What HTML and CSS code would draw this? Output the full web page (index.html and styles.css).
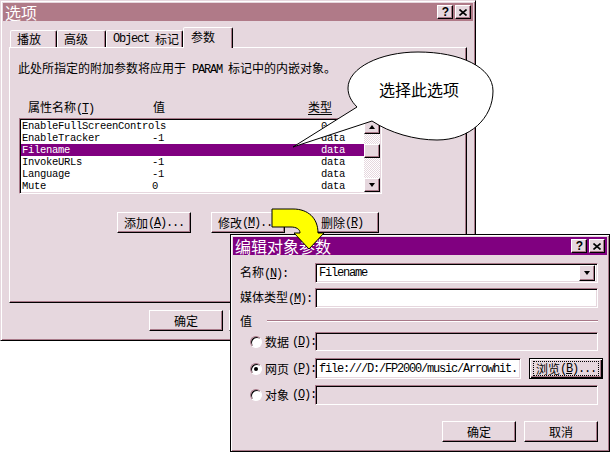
FILE: index.html
```html
<!DOCTYPE html>
<html lang="zh-CN">
<head>
<meta charset="utf-8">
<title>选项</title>
<link rel="stylesheet" href="styles.css">
</head>
<body>
<div class="desk">

  <section class="win win-opts">
    <header class="title title-inactive">
      <span class="title-text">选项</span>
      <div class="title-btns">
        <span class="tbtn tbtn-q">?</span>
        <span class="tbtn"><svg class="xglyph" width="8" height="7" viewBox="0 0 8 7"><path d="M0.5 0.5L7.5 6.5M7.5 0.5L0.5 6.5" stroke="#000" stroke-width="1.6" fill="none"/></svg></span>
      </div>
    </header>

    <nav class="tabs">
      <span class="tab">播放</span>
      <span class="tab">高级</span>
      <span class="tab"><span class="mono">Object&nbsp;</span>标记</span>
      <span class="tab tab-active">参数</span>
    </nav>

    <div class="panel">
      <p class="desc">此处所指定的附加参数将应用于<span class="mono">&nbsp;PARAM&nbsp;</span>标记中的内嵌对象。</p>
      <div class="cols">
        <span>属性名称<span class="mono">(<u>T</u>)</span></span>
        <span>值</span>
        <span class="col-type">类型</span>
      </div>
      <div class="listbox">
        <ul class="rows">
          <li class="row"><span>EnableFullScreenControls</span><span></span><span>0</span></li>
          <li class="row"><span>EnableTracker</span><span>-1</span><span>data</span></li>
          <li class="row row-sel"><span>Filename</span><span></span><span>data</span></li>
          <li class="row"><span>InvokeURLs</span><span>-1</span><span>data</span></li>
          <li class="row"><span>Language</span><span>-1</span><span>data</span></li>
          <li class="row"><span>Mute</span><span>0</span><span>data</span></li>
        </ul>
        <div class="vscroll">
          <span class="sbtn"><i class="tri tri-up"></i></span>
          <span class="sbtn thumb"></span>
          <span class="sfill"></span>
          <span class="sbtn"><i class="tri tri-down"></i></span>
        </div>
      </div>
      <div class="actions">
        <button class="btn">添加<span class="mono">(<u>A</u>)...</span></button>
        <button class="btn">修改<span class="mono">(<u>M</u>)...</span></button>
        <button class="btn">删除<span class="mono">(<u>R</u>)</span></button>
      </div>
    </div>

    <footer class="footer">
      <button class="btn">确定</button>
      <button class="btn">取消</button>
    </footer>
  </section>

  <section class="win win-edit">
    <header class="title title-active">
      <span class="title-text">编辑对象参数</span>
      <div class="title-btns">
        <span class="tbtn tbtn-q">?</span>
        <span class="tbtn"><svg class="xglyph" width="8" height="7" viewBox="0 0 8 7"><path d="M0.5 0.5L7.5 6.5M7.5 0.5L0.5 6.5" stroke="#000" stroke-width="1.6" fill="none"/></svg></span>
      </div>
    </header>

    <div class="edit-body">
      <div class="frow frow-first">
        <span>名称<span class="mono">(<u>N</u>):</span></span>
        <div class="field combo"><span class="mono">Filename</span><span class="dropbtn"><i class="tri tri-down"></i></span></div>
      </div>
      <div class="frow frow-second">
        <span>媒体类型<span class="mono">(<u>M</u>):</span></span>
        <div class="field"></div>
      </div>
      <div class="group">
        <span>值</span>
        <span class="groove"></span>
      </div>
      <div class="frow rrow rrow-1">
        <span class="radio"><i class="rdot"></i>数据<span class="mono">(<u>D</u>):</span></span>
        <div class="field field-off"></div>
      </div>
      <div class="frow rrow rrow-2">
        <span class="radio"><i class="rdot rdot-on"></i>网页<span class="mono">(<u>P</u>):</span></span>
        <div class="urlline">
          <div class="field"><span class="mono">file:///D:/FP2000/music/Arrowhit.</span></div>
          <button class="btn btn-default"><span class="focus">浏览<span class="mono">(<u>B</u>)...</span></span></button>
        </div>
      </div>
      <div class="frow rrow rrow-3">
        <span class="radio"><i class="rdot"></i>对象<span class="mono">(<u>O</u>):</span></span>
        <div class="field field-off"></div>
      </div>
      <div class="btnrow">
        <button class="btn">确定</button>
        <button class="btn">取消</button>
      </div>
    </div>
  </section>

  <svg class="overlay" width="611" height="453" viewBox="0 0 611 453">
    <path class="bubble" d="M357 107 L293 147 L372 121 C390 133 415 140 437 140 C470 140 493 118 493 91 C493 67 460 52 418 52 C380 52 348 68 348 88 C348 95 351 101 357 107 Z"/>
    <text class="bubble-text" x="419" y="96" text-anchor="middle">选择此选项</text>
    <path class="arrow" d="M272 209 L293 209 C308 209 318 218 318 233 L324 233 L309 249 L294 233 L300 233 C300 229 296 227 291 227 L272 227 Z"/>
  </svg>

</div>
</body>
</html>
```

FILE: styles.css
```css
* {
  box-sizing: border-box;
  margin: 0;
  padding: 0;
}

html, body {
  background: #fff;
}

body {
  width: 611px;
  height: 453px;
  overflow: hidden;
  font-family: "Noto Sans CJK SC", "Noto Sans", sans-serif;
  font-size: 12px;
  line-height: 12px;
  color: #000;
}

u {
  text-decoration: underline;
  text-underline-offset: 1px;
}

.desk {
  position: relative;
  width: 611px;
  height: 453px;
}

.mono,
.row {
  font-family: "Liberation Mono", "DejaVu Sans Mono", monospace;
  font-size: 12px;
  letter-spacing: -1.2px;
}

/* ---------- window frame ---------- */
.win {
  position: absolute;
  display: flex;
  flex-direction: column;
  background: #e6d7de;
  border: 1px solid;
  border-color: #e6d7de #000 #000 #e6d7de;
  box-shadow: inset 1px 1px 0 #fff, inset -1px -1px 0 #a87888;
  padding: 2px;
}

.win-opts {
  left: 0;
  top: 0;
  width: 476px;
  height: 341px;
}

.win-edit {
  left: 230px;
  top: 234px;
  width: 380px;
  height: 218px;
  border-color: #000;
}

.title {
  height: 18px;
  flex: none;
  display: flex;
  align-items: center;
  justify-content: space-between;
  padding: 0 2px 0 2px;
  color: #fff;
}

.title-text {
  font-size: 16px;
  line-height: 18px;
}

.title-inactive {
  background: #b07a88;
}

.title-active {
  background: #800080;
}

.title-btns {
  display: flex;
  gap: 2px;
}

.tbtn {
  width: 16px;
  height: 14px;
  display: flex;
  align-items: center;
  justify-content: center;
  background: #e6d7de;
  border: 1px solid;
  border-color: #fff #000 #000 #fff;
  box-shadow: inset -1px -1px 0 #a87888;
  color: #000;
}

.tbtn-q {
  font-family: "Liberation Sans", Arial, sans-serif;
  font-weight: bold;
  font-size: 12px;
  line-height: 12px;
  padding-left: 1px;
}

.xglyph {
  display: block;
  margin-left: -1px;
}

/* ---------- tabs ---------- */
.tabs {
  position: relative;
  z-index: 1;
  margin-top: 6px;
  margin-left: 7px;
  height: 20px;
  display: grid;
  grid-template-columns: 47px 49px 77px 50px;
  align-items: end;
}

.tab {
  height: 17px;
  display: flex;
  align-items: center;
  padding-left: 6px;
  white-space: nowrap;
  background: #e6d7de;
  border: 1px solid;
  border-bottom: none;
  border-color: #fff #000 transparent #fff;
  border-radius: 2px 2px 0 0;
  box-shadow: inset -1px 0 0 #a87888;
}

.tab-active {
  height: 21px;
  margin-bottom: -1px;
  padding-left: 7px;
  padding-bottom: 3px;
}

.panel {
  margin-left: 6px;
  width: 458px;
  height: 256px;
  border: 1px solid;
  border-color: #fff #000 #000 #fff;
  box-shadow: inset -1px -1px 0 #a87888;
  padding-left: 8px;
}

.desc {
  margin-top: 14px;
  white-space: nowrap;
}

.cols {
  margin-top: 25px;
  padding-left: 10px;
  display: grid;
  grid-template-columns: 125px 155px auto;
}

.col-type {
  text-decoration: underline;
  text-underline-offset: 2px;
}

/* ---------- list box ---------- */
.listbox {
  margin-top: 3px;
  margin-left: 1px;
  width: 363px;
  height: 76px;
  display: flex;
  padding: 1px;
  background: #fff;
  border: 1px solid;
  border-color: #a87888 #fff #fff #a87888;
  box-shadow: inset 1px 1px 0 #000, inset -1px -1px 0 #e6d7de;
}

.rows {
  list-style: none;
  flex: 1;
  overflow: hidden;
}

.row {
  height: 12px;
  line-height: 12px;
  font-size: 10.5px;
  letter-spacing: -0.3px;
  display: grid;
  grid-template-columns: 130px 169px 1fr;
  align-items: center;
  padding-left: 1px;
  white-space: nowrap;
}

.row-sel {
  background: #800080;
  color: #fff;
}

.vscroll {
  width: 16px;
  flex: none;
  display: flex;
  flex-direction: column;
  background: repeating-conic-gradient(#fff 0 25%, #e6d7de 0 50%) 0 0 / 2px 2px;
}

.sbtn {
  height: 14px;
  flex: none;
  display: flex;
  align-items: center;
  justify-content: center;
  background: #e6d7de;
  border: 1px solid;
  border-color: #fff #000 #000 #fff;
  box-shadow: inset -1px -1px 0 #a87888;
}

.thumb {
  margin-top: 10px;
}

.sfill {
  flex: 1;
}

.tri {
  display: block;
  width: 0;
  height: 0;
  border-left: 3.5px solid transparent;
  border-right: 3.5px solid transparent;
}

.tri-up {
  border-bottom: 4px solid #000;
}

.tri-down {
  border-top: 4px solid #000;
}

/* ---------- buttons ---------- */
.btn {
  width: 74px;
  height: 21px;
  display: flex;
  align-items: center;
  justify-content: center;
  font: inherit;
  color: #000;
  background: #e6d7de;
  border: 1px solid;
  border-color: #fff #000 #000 #fff;
  box-shadow: inset -1px -1px 0 #a87888;
  white-space: nowrap;
}

.btn-default {
  border-color: #000;
  box-shadow: inset 1px 1px 0 #fff, inset -1px -1px 0 #000, inset -2px -2px 0 #a87888;
}

.focus {
  display: flex;
  align-items: center;
  justify-content: center;
  width: 64px;
  height: 13px;
  outline: 1px dotted #000;
}

.actions {
  margin-top: 18px;
  padding-left: 99px;
  display: flex;
  gap: 20px;
}

.footer {
  margin-top: 7px;
  padding-left: 146px;
  display: flex;
  gap: 6px;
}

/* ---------- edit dialog ---------- */
.edit-body {
  padding: 0 9px 0 7px;
  display: flex;
  flex-direction: column;
}

.frow {
  display: grid;
  grid-template-columns: 75px 1fr;
  align-items: center;
  height: 20px;
  white-space: nowrap;
}

.frow-first {
  margin-top: 8px;
}

.frow-second {
  margin-top: 5px;
}

.field {
  height: 100%;
  display: flex;
  align-items: center;
  padding: 0 3px;
  background: #fff;
  border: 1px solid;
  border-color: #a87888 #fff #fff #a87888;
  box-shadow: inset 1px 1px 0 #000, inset -1px -1px 0 #e6d7de;
  overflow: hidden;
  white-space: nowrap;
}

.field-off {
  background: #e6d7de;
}

.combo {
  justify-content: space-between;
  padding-right: 2px;
}

.dropbtn {
  width: 16px;
  height: 16px;
  display: flex;
  align-items: center;
  justify-content: center;
  background: #e6d7de;
  border: 1px solid;
  border-color: #fff #000 #000 #fff;
  box-shadow: inset -1px -1px 0 #a87888;
}

.group {
  margin-top: 7px;
  height: 12px;
  display: flex;
  align-items: center;
  gap: 15px;
}

.groove {
  flex: 1;
  height: 2px;
  border-top: 1px solid #a87888;
  border-bottom: 1px solid #fff;
}

.rrow-1 {
  margin-top: 5px;
  height: 19px;
}

.rrow-2 {
  margin-top: 7px;
}

.rrow-3 {
  margin-top: 7px;
}

.radio {
  display: flex;
  align-items: center;
  gap: 3px;
  padding-left: 10px;
}

.rdot {
  position: relative;
  width: 12px;
  height: 12px;
  flex: none;
  border-radius: 50%;
  background: #fff;
  border: 1px solid;
  border-color: #a87888 #fff #fff #a87888;
  box-shadow: inset 1px 1px 0 #000;
}

.rdot-on::after {
  content: "";
  position: absolute;
  left: 3px;
  top: 3px;
  width: 4px;
  height: 4px;
  border-radius: 50%;
  background: #000;
}

.urlline {
  height: 100%;
  display: flex;
  gap: 8px;
}

.urlline .field {
  flex: 1;
}

.btnrow {
  margin-top: 16px;
  display: flex;
  justify-content: flex-end;
  gap: 8px;
}

/* ---------- overlay: callout + arrow ---------- */
.overlay {
  position: absolute;
  left: 0;
  top: 0;
  pointer-events: none;
}

.bubble {
  fill: #fff;
  stroke: #000;
  stroke-width: 1;
}

.bubble-text {
  font-family: "Noto Sans CJK SC", sans-serif;
  font-size: 16px;
  fill: #000;
}

.arrow {
  fill: #ffff00;
  stroke: #000;
  stroke-width: 1;
}
```
